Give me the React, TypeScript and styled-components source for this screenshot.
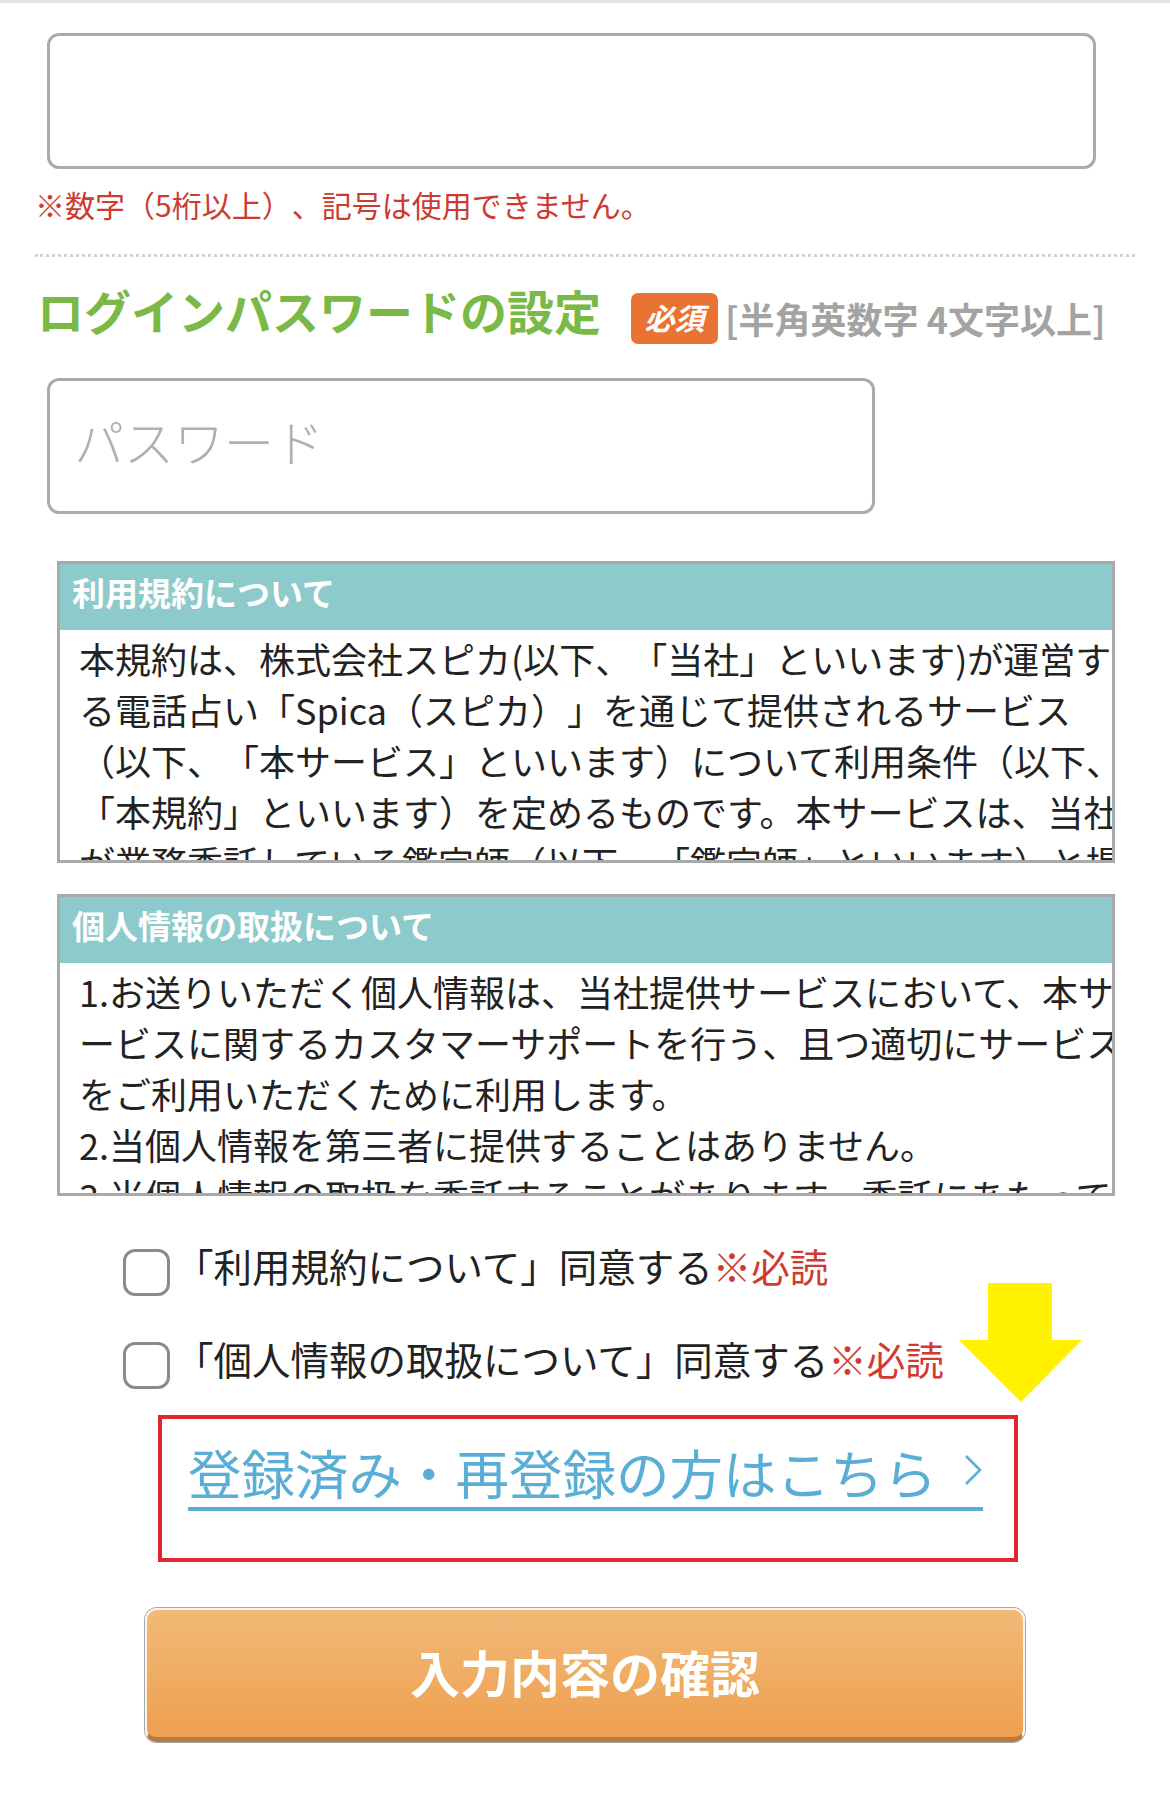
import { FC } from 'react'
import styled, { createGlobalStyle } from 'styled-components'

const GlobalStyle = createGlobalStyle`
  html, body {
    margin: 0;
    padding: 0;
    background: #fff;
  }
  body {
    font-family: "Noto Sans CJK JP", "Noto Sans", sans-serif;
    color: #222;
    text-spacing-trim: space-all;
  }
`

const termsLines: string[] = [
  '本規約は、株式会社スピカ(以下、「当社」といいます)が運営す',
  'る電話占い「Spica（スピカ）」を通じて提供されるサービス',
  '（以下、「本サービス」といいます）について利用条件（以下、',
  '「本規約」といいます）を定めるものです。本サービスは、当社',
  'が業務委託している鑑定師（以下、「鑑定師」といいます）と提',
]

const privacyLines: string[] = [
  '1.お送りいただく個人情報は、当社提供サービスにおいて、本サ',
  'ービスに関するカスタマーサポートを行う、且つ適切にサービス',
  'をご利用いただくために利用します。',
  '2.当個人情報を第三者に提供することはありません。',
  '3.当個人情報の取扱を委託することがあります。委託にあたって',
]

const DownArrow: FC = () => (
  <ArrowMark width="123" height="119" viewBox="0 0 123 119">
    <polygon points="29,0 93,0 93,57 123,57 62,119 0,57 29,57" fill="#fff100" />
  </ArrowMark>
)

const App: FC = () => {
  return (
    <Page>
      <GlobalStyle />
      <TextField type="text" />
      <Note>※数字（5桁以上）、記号は使用できません。</Note>
      <Divider />

      <HeadingRow>
        <Heading>ログインパスワードの設定</Heading>
        <Badge>必須</Badge>
        <Hint>[半角英数字 4文字以上]</Hint>
      </HeadingRow>
      <PasswordField type="password" placeholder="パスワード" />

      <DocBox $top={47}>
        <DocTitle>利用規約について</DocTitle>
        <DocBody>
          {termsLines.map((line) => (
            <DocLine key={line}>{line}</DocLine>
          ))}
        </DocBody>
      </DocBox>

      <DocBox $top={31}>
        <DocTitle>個人情報の取扱について</DocTitle>
        <DocBody>
          {privacyLines.map((line) => (
            <DocLine key={line}>{line}</DocLine>
          ))}
        </DocBody>
      </DocBox>

      <AgreeSection>
        <AgreeRow>
          <CheckBox type="checkbox" />
          <AgreeLabel>
            「利用規約について」同意する<Must>※必読</Must>
          </AgreeLabel>
        </AgreeRow>
        <AgreeRow>
          <CheckBox type="checkbox" />
          <AgreeLabel>
            「個人情報の取扱について」同意する<Must>※必読</Must>
          </AgreeLabel>
        </AgreeRow>
        <DownArrow />
      </AgreeSection>

      <LinkFrame>
        <LoginLink href="#">
          登録済み・再登録の方はこちら
          <Chevron width="20" height="32" viewBox="0 0 20 32">
            <polyline points="3,2 17,16 3,30" fill="none" stroke="#5aaed6" strokeWidth="2.6" />
          </Chevron>
        </LoginLink>
      </LinkFrame>

      <ConfirmButton type="button">入力内容の確認</ConfirmButton>
    </Page>
  )
}

const Page = styled.div`
  width: 1170px;
  min-height: 1818px;
  box-sizing: border-box;
  border-top: 3px solid #e2e2e2;
  padding: 0 35px 80px;
  display: flex;
  flex-direction: column;
  align-items: flex-start;
`

const fieldBase = `
  box-sizing: border-box;
  height: 136px;
  margin-left: 12px;
  border: 3px solid #ababab;
  border-radius: 12px;
  background: #fff;
  outline: none;
  font-family: "Noto Sans CJK JP", sans-serif;
`

const TextField = styled.input`
  ${fieldBase}
  width: 1049px;
  margin-top: 30px;
`

const PasswordField = styled.input`
  ${fieldBase}
  width: 828px;
  margin-top: 34px;
  padding: 0 24px 12px;
  font-size: 50px;
  font-weight: 300;
  color: #333;

  &::placeholder {
    color: #b0b0b0;
  }
`

const Note = styled.p`
  margin: 17px 0 0;
  font-size: 30px;
  line-height: 36px;
  color: #cc3a30;
`

const Divider = styled.hr`
  width: 1100px;
  margin: 32px 0 0;
  border: none;
  border-top: 3px dotted #d2d2d2;
`

const HeadingRow = styled.div`
  display: flex;
  align-items: center;
  height: 51px;
  margin-top: 36px;
  margin-left: 2px;
`

const Heading = styled.h2`
  margin: 0 0 18px;
  font-size: 47px;
  font-weight: 700;
  line-height: 51px;
  color: #7ab946;
`

const Badge = styled.span`
  box-sizing: border-box;
  display: inline-flex;
  align-items: center;
  justify-content: center;
  width: 87px;
  height: 51px;
  margin-left: 30px;
  padding-bottom: 4px;
  border-radius: 7px;
  background: #ea7232;
  color: #fff;
  font-size: 30px;
  font-weight: 700;
  font-style: italic;
`

const Hint = styled.span`
  margin-left: 7px;
  margin-bottom: 2px;
  font-size: 36px;
  font-weight: 700;
  color: #a3a3a3;
`

const DocBox = styled.section<{ $top: number }>`
  box-sizing: border-box;
  width: 1058px;
  height: 302px;
  margin-top: ${(p) => p.$top}px;
  margin-left: 22px;
  border: 3px solid #a9a9a9;
  background: #fff;
  overflow: hidden;
`

const DocTitle = styled.h3`
  box-sizing: border-box;
  margin: 0;
  height: 66px;
  padding: 0 0 10px 12px;
  display: flex;
  align-items: center;
  background: #8dcacc;
  color: #fff;
  font-size: 33px;
  font-weight: 700;
`

const DocBody = styled.div`
  padding: 3px 0 0 19px;
`

const DocLine = styled.div`
  height: 51px;
  line-height: 51px;
  font-size: 36px;
  white-space: nowrap;
  color: #222;
`

const AgreeSection = styled.div`
  position: relative;
  width: 1100px;
  margin-top: 53px;
  display: flex;
  flex-direction: column;
  gap: 46px;
`

const AgreeRow = styled.label`
  display: flex;
  align-items: center;
  height: 47px;
  margin-left: 88px;
`

const CheckBox = styled.input`
  appearance: none;
  box-sizing: border-box;
  flex: none;
  width: 47px;
  height: 47px;
  margin: 0;
  border: 3px solid #8b8b8b;
  border-radius: 12px;
  background: #fff;
`

const AgreeLabel = styled.span`
  margin-left: 5px;
  margin-bottom: 14px;
  font-size: 38.5px;
  line-height: 47px;
  color: #222;
  white-space: nowrap;
`

const Must = styled.span`
  color: #d13a31;
`

const ArrowMark = styled.svg`
  position: absolute;
  left: 924px;
  top: 34px;
`

const LinkFrame = styled.div`
  box-sizing: border-box;
  width: 860px;
  height: 147px;
  margin-top: 26px;
  margin-left: 123px;
  padding: 22px 0 0 26px;
  border: 4px solid #e0262f;
`

const LoginLink = styled.a`
  display: inline-flex;
  align-items: center;
  gap: 26px;
  height: 62px;
  padding-bottom: 4px;
  border-bottom: 4px solid #5aaed6;
  font-size: 53.5px;
  line-height: 62px;
  color: #5aaed6;
  text-decoration: none;
  white-space: nowrap;
`

const Chevron = styled.svg`
  flex: none;
  margin-top: -4px;
`

const ConfirmButton = styled.button`
  box-sizing: border-box;
  width: 880px;
  height: 134px;
  margin-top: 46px;
  margin-left: 110px;
  padding-bottom: 6px;
  border: 2px solid #fdf3e8;
  border-bottom: 5px solid #b87a40;
  border-radius: 12px;
  box-shadow: 0 0 0 1px #a8a8a8;
  background: linear-gradient(to bottom, #f2b978, #eda050);
  color: #fff;
  font-family: "Noto Sans CJK JP", sans-serif;
  font-size: 50px;
  font-weight: 700;
  cursor: pointer;
`

export default App
